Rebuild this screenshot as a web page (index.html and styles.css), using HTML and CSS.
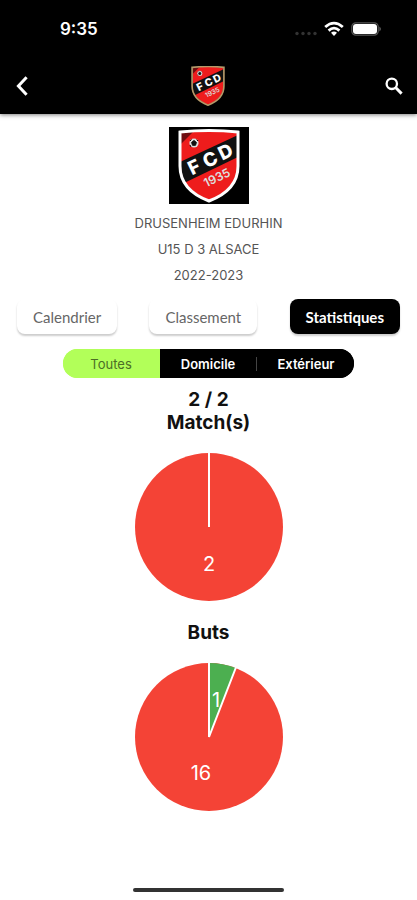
FILE: index.html
```html
<!DOCTYPE html>
<html lang="fr">
<head>
    <meta charset="UTF-8">
    <meta name="viewport" content="width=device-width, initial-scale=1.0">
    <title>Statistiques</title>
    <link rel="stylesheet" href="styles.css">
</head>
<body>
    <header class="top">
        <div class="status-bar">
            <span class="clock">9:35</span>
            <div class="status-icons">
                <svg class="dots" width="22" height="16" viewBox="0 0 22 16" fill="#333">
                    <circle cx="2" cy="12.5" r="1.7"/>
                    <circle cx="8" cy="12.5" r="1.7"/>
                    <circle cx="14" cy="12.5" r="1.7"/>
                    <circle cx="20" cy="12.5" r="1.7"/>
                </svg>
                <svg class="wifi" width="20" height="16" viewBox="0 0 20 16" fill="none" stroke="#fff" stroke-width="2.8">
                    <path d="M1.2 6 Q10 -1.8 18.8 6"/>
                    <path d="M4.6 9.6 Q10 4.6 15.4 9.6"/>
                    <path d="M10 15 L7 11.8 Q10 9.4 13 11.8 Z" fill="#fff" stroke="none"/>
                </svg>
                <svg class="battery" width="31" height="16" viewBox="0 0 31 16">
                    <rect x="0.8" y="1.8" width="26.4" height="12.4" rx="4" fill="none" stroke="#555" stroke-width="1.2"/>
                    <rect x="2" y="3" width="24" height="10" rx="3" fill="#fff"/>
                    <path d="M28.5 5.5 Q31 8 28.5 10.5 Z" fill="#777"/>
                </svg>
            </div>
        </div>
        <nav class="app-bar">
            <button class="icon-button" type="button" aria-label="Retour">
                <svg width="12" height="20" viewBox="0 0 12 20" fill="none" stroke="#fff" stroke-width="3">
                    <path d="M10.6 1.2 L2.4 10 L10.6 18.8"/>
                </svg>
            </button>
            <svg class="crest-small" width="34" height="40" viewBox="0 0 62 72" role="img" aria-label="FCD 1935">
                <use href="#crest"/>
            </svg>
            <button class="icon-button" type="button" aria-label="Rechercher">
                <svg width="18" height="18" viewBox="0 0 18 18" fill="none" stroke="#fff">
                    <circle cx="6.8" cy="6.8" r="5.2" stroke-width="2.3"/>
                    <path d="M10.8 10.8 L16.6 16.6" stroke-width="3"/>
                </svg>
            </button>
        </nav>
    </header>

    <main class="content">
        <section class="team">
            <div class="team-logo">
                <svg width="62" height="74" viewBox="0 0 62 72" role="img" aria-label="FCD 1935">
                    <defs>
                        <clipPath id="shield">
                            <path d="M3 3 Q31 -1 59 3 V36 Q59 59 31 70 Q3 59 3 36 Z"/>
                        </clipPath>
                        <g id="crest">
                            <g clip-path="url(#shield)">
                                <rect width="62" height="72" fill="#ee1c1c"/>
                                <path d="M0 33 L62 4 V26 L0 56 Z" fill="#111"/>
                                <path d="M3 0 H17 L3 14 Z" fill="#6e0d10"/>
                            </g>
                            <path class="crest-edge" d="M2 2 Q31 -1 60 2 V36 Q60 60 31 71 Q2 60 2 36 Z" fill="none"/>
                            <circle cx="16" cy="13" r="4.6" fill="#ddd"/>
                            <path d="M16 10.5 L18.4 12.4 L17.5 15.3 H14.5 L13.6 12.4 Z M12 11 L13.5 9.5 M20 11 L18.6 9.6 M13 17 L12 15" fill="#111" stroke="#111"/>
                            <g transform="translate(32 29) rotate(-26)" text-anchor="middle">
                                <text class="crest-name" x="-18" y="7">F</text>
                                <text class="crest-name" x="0" y="7">C</text>
                                <text class="crest-name" x="17" y="7">D</text>
                                <text class="crest-year" x="-2" y="24">1935</text>
                            </g>
                        </g>
                    </defs>
                    <use href="#crest"/>
                </svg>
            </div>
            <p>DRUSENHEIM EDURHIN</p>
            <p>U15 D 3 ALSACE</p>
            <p>2022-2023</p>
        </section>

        <div class="pages">
            <button class="page-button" type="button">Calendrier</button>
            <button class="page-button" type="button">Classement</button>
            <button class="page-button selected" type="button">Statistiques</button>
        </div>

        <div class="filters">
            <button class="filter selected" type="button">Toutes</button>
            <button class="filter" type="button">Domicile</button>
            <span class="divider"></span>
            <button class="filter" type="button">Extérieur</button>
        </div>

        <section class="chart">
            <h2>2 / 2<br>Match(s)</h2>
            <svg class="pie" viewBox="-75 -75 150 150">
                <circle r="74" fill="#f44336"/>
                <path d="M0 0 V-75" stroke="#fff" stroke-width="2"/>
                <text x="0" y="44">2</text>
            </svg>
        </section>

        <section class="chart">
            <h2>Buts</h2>
            <svg class="pie" viewBox="-75 -75 150 150">
                <circle r="74" fill="#f44336"/>
                <path d="M0 0 V-74 A74 74 0 0 1 26.7 -69 Z" fill="#4caf50"/>
                <path d="M0 -75 V0 L27.1 -70" fill="none" stroke="#fff" stroke-width="2"/>
                <text x="7" y="-30">1</text>
                <text x="-8" y="43">16</text>
            </svg>
        </section>
    </main>

    <div class="home-bar"></div>
</body>
</html>
```

FILE: styles.css
```css
* {
    margin: 0;
    padding: 0;
    box-sizing: border-box;
}

body {
    display: flex;
    flex-direction: column;
    min-height: 100vh;
    background-color: #fff;
    color: #111;
    font-family: Inter, "Liberation Sans", sans-serif;
}

button {
    border: none;
    background: none;
    font-family: inherit;
    cursor: pointer;
}

svg {
    display: block;
}

/* Black top area */
.top {
    background-color: #000;
    color: #fff;
    box-shadow: 0 1px 4px rgba(0, 0, 0, 0.5);
}

.status-bar {
    display: flex;
    justify-content: space-between;
    align-items: center;
    height: 57px;
    padding: 0 35px 0 60px;
}

.clock {
    font-size: 17px;
    font-weight: 600;
}

.status-icons {
    display: flex;
    align-items: center;
    gap: 7px;
}

.app-bar {
    display: flex;
    justify-content: space-between;
    align-items: center;
    height: 57px;
    padding: 0 9px 0 8px;
}

.icon-button {
    display: flex;
    justify-content: center;
    align-items: center;
    width: 28px;
    height: 40px;
}

/* Club crest */
.crest-edge {
    stroke: var(--edge, #fff);
    stroke-width: 3;
}

.crest-small {
    --edge: #b59a6a;
}

.crest-name {
    fill: #fff;
    font-size: 19px;
    font-weight: 800;
}

.crest-year {
    fill: #ddd;
    font-size: 12px;
    font-weight: 600;
}

/* Team */
.content {
    flex: 1;
}

.team {
    display: flex;
    flex-direction: column;
    align-items: center;
    padding-top: 13px;
    font-size: 13px;
    line-height: 26px;
    color: #555;
}

.team-logo {
    display: flex;
    justify-content: center;
    align-items: center;
    width: 80px;
    height: 77px;
    margin-bottom: 6px;
    background-color: #000;
}

/* Page buttons */
.pages {
    display: flex;
    justify-content: space-between;
    padding: 11px 17px 0;
}

.page-button {
    height: 35px;
    padding: 0 16px;
    border-radius: 8px;
    background-color: #fff;
    color: #666;
    font-family: Lato, sans-serif;
    font-size: 15px;
    box-shadow: 0 2px 2px rgba(0, 0, 0, 0.2);
}

.page-button.selected {
    background-color: #000;
    color: #fff;
    font-weight: 700;
}

/* Home / away filter */
.filters {
    display: flex;
    align-items: center;
    width: 70%;
    height: 29px;
    margin: 15px auto 0;
    border-radius: 15px;
    background: linear-gradient(to right, #b2ff59 30%, #000 30%);
    overflow: hidden;
}

.filter {
    flex: 1;
    height: 100%;
    color: #fff;
    font-size: 13px;
    font-weight: 600;
}

.filter.selected {
    background-color: #b2ff59;
    color: #4c6e26;
    font-weight: 400;
}

.filter:not(.selected) {
    background-color: #000;
}

.divider {
    width: 1px;
    height: 14px;
    background-color: #444;
}

/* Charts */
.chart {
    display: flex;
    flex-direction: column;
    align-items: center;
    padding-top: 10px;
}

.chart h2 {
    font-size: 19px;
    font-weight: 700;
    line-height: 23px;
    text-align: center;
}

.pie {
    width: 150px;
    height: 150px;
    margin: 18px 0 9px;
}

.pie text {
    fill: #fff;
    font-size: 20px;
    text-anchor: middle;
}

.home-bar {
    width: 36%;
    height: 4px;
    margin: 0 auto 8px;
    border-radius: 2px;
    background-color: #333;
}
```
